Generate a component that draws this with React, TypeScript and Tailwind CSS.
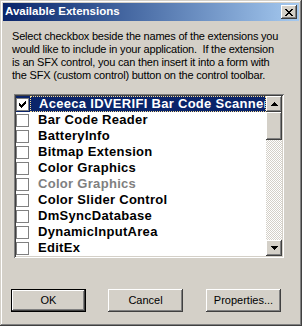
import React from "react";

const items = [
  "Aceeca IDVERIFI Bar Code Scanner",
  "Bar Code Reader",
  "BatteryInfo",
  "Bitmap Extension",
  "Color Graphics",
  "Color Graphics",
  "Color Slider Control",
  "DmSyncDatabase",
  "DynamicInputArea",
  "EditEx",
];

const raised =
  "shadow-[inset_-1px_-1px_#404040,inset_1px_1px_#ffffff,inset_-2px_-2px_#808080,inset_2px_2px_#d4d0c8]";

function Check() {
  return (
    <svg width="7" height="7" viewBox="0 0 7 7" shapeRendering="crispEdges">
      <path
        fill="#000"
        d="M6 0h1v1h-1z M5 1h2v1h-2z M0 2h1v1h-1z M4 2h3v1h-3z M0 3h2v1h-2z M3 3h3v1h-3z M0 4h5v1h-5z M1 5h3v1h-3z M2 6h1v1h-1z"
      />
    </svg>
  );
}

function CloseGlyph() {
  return (
    <svg width="8" height="7" viewBox="0 0 8 7" shapeRendering="crispEdges">
      <path
        fill="#000"
        d="M0 0h2v1h-2z M6 0h2v1h-2z M1 1h2v1h-2z M5 1h2v1h-2z M2 2h4v1h-4z M3 3h2v1h-2z M2 4h4v1h-4z M1 5h2v1h-2z M5 5h2v1h-2z M0 6h2v1h-2z M6 6h2v1h-2z"
      />
    </svg>
  );
}

function Arrow({ down }: { down?: boolean }) {
  return (
    <svg width="7" height="4" viewBox="0 0 7 4" shapeRendering="crispEdges">
      <path
        fill="#000"
        d={
          down
            ? "M0 0h7v1h-7z M1 1h5v1h-5z M2 2h3v1h-3z M3 3h1v1h-1z"
            : "M3 0h1v1h-1z M2 1h3v1h-3z M1 2h5v1h-5z M0 3h7v1h-7z"
        }
      />
    </svg>
  );
}

function Button({ label, isDefault }: { label: string; isDefault?: boolean }) {
  return (
    <div
      className={`w-[75px] h-[23px] flex items-center justify-center text-[11px] text-black bg-[#d4d0c8] ${
        isDefault
          ? "border border-black shadow-[inset_-1px_-1px_#404040,inset_1px_1px_#ffffff,inset_-2px_-2px_#808080,inset_2px_2px_#d4d0c8]"
          : raised
      }`}
    >
      {label}
    </div>
  );
}

export default function App() {
  return (
    <div
      className="w-[302px] h-[326px] bg-[#d4d0c8] p-[3px] flex flex-col shadow-[inset_-1px_-1px_#404040,inset_1px_1px_#d4d0c8,inset_-2px_-2px_#808080,inset_2px_2px_#ffffff]"
      style={{ fontFamily: '"Liberation Sans", Arial, sans-serif' }}
    >
      {/* Title bar */}
      <div className="h-[18px] flex items-center bg-linear-to-r from-[#0a246a] to-[#a6caf0]">
        <span className="pl-[2px] text-white font-bold text-[11.5px] leading-none">
          Available Extensions
        </span>
        <div className={`ml-auto mr-[2px] w-[16px] h-[14px] bg-[#d4d0c8] flex items-center justify-center ${raised}`}>
          <CloseGlyph />
        </div>
      </div>

      {/* Description */}
      <p className="mt-[9px] px-[9px] text-[11px] tracking-[-0.2px] leading-[13px] text-black whitespace-pre">
        Select checkbox beside the names of the extensions you{"\n"}
        would like to include in your application.  If the extension{"\n"}
        is an SFX control, you can then insert it into a form with{"\n"}
        the SFX (custom control) button on the control toolbar.
      </p>

      {/* List box */}
      <div className="mt-[12px] ml-[11px] w-[270px] h-[164px] bg-white p-[2px] flex shadow-[inset_1px_1px_#808080,inset_-1px_-1px_#ffffff,inset_2px_2px_#404040,inset_-2px_-2px_#d4d0c8]">
        <div className="flex-1 flex flex-col overflow-hidden">
          {items.map((name, i) => {
            const selected = i === 0;
            const disabled = i === 5;
            return (
              <div
                key={i}
                className={`h-[16px] flex items-center shrink-0 ${selected ? "bg-[#0a246a]" : ""}`}
              >
                <div className="w-[13px] h-[13px] border border-[#808080] bg-white flex items-center justify-center shrink-0">
                  {selected && <Check />}
                </div>
                <div
                  className={`ml-[1px] h-[16px] flex-1 flex items-center pl-[8px] whitespace-nowrap overflow-hidden text-[13px] font-bold tracking-[0.3px] ${
                    selected
                      ? "text-white border border-dotted border-[#f5db95] pl-[7px]"
                      : disabled
                      ? "text-[#808080]"
                      : "text-black"
                  }`}
                >
                  {name}
                </div>
              </div>
            );
          })}
        </div>
        {/* Scrollbar */}
        <div className="w-[16px] flex flex-col bg-[repeating-conic-gradient(#ffffff_0_25%,#d4d0c8_0_50%)] bg-[length:2px_2px]">
          <div className={`h-[16px] bg-[#d4d0c8] flex items-center justify-center ${raised}`}>
            <Arrow />
          </div>
          <div className={`h-[28px] bg-[#d4d0c8] ${raised}`} />
          <div className="flex-1" />
          <div className={`h-[16px] bg-[#d4d0c8] flex items-center justify-center ${raised}`}>
            <Arrow down />
          </div>
        </div>
      </div>

      {/* Buttons */}
      <div className="mt-[31px] ml-[8px] flex">
        <Button label="OK" isDefault />
        <div className="w-[22px]" />
        <Button label="Cancel" />
        <div className="w-[23px]" />
        <Button label="Properties..." />
      </div>
    </div>
  );
}
